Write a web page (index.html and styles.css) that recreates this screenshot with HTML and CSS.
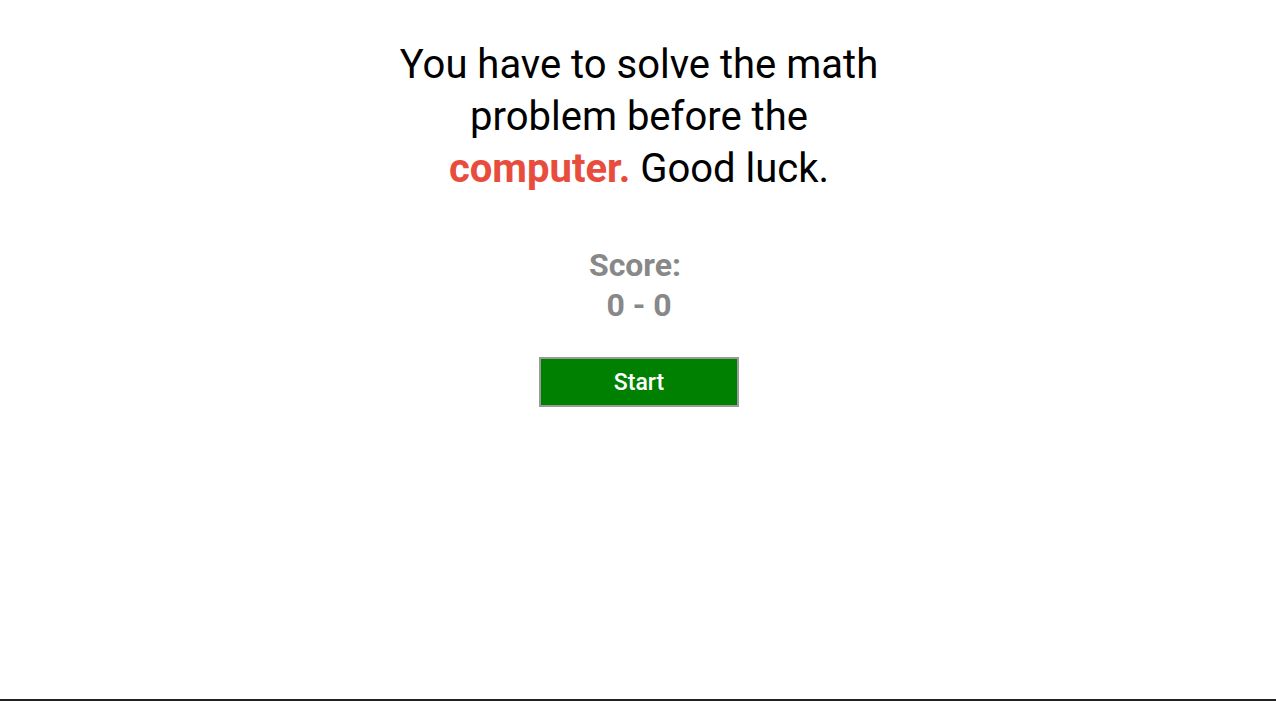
FILE: index.html
```html
<!DOCTYPE html>
<html>
<head>
<meta charset="utf-8">
<link rel="stylesheet" href="styles.css">
</head>
<body>
<div class="page">
  <main class="game">
    <h1 class="intro">You have to solve the math problem before the <span class="computer">computer.</span> Good luck.</h1>
    <div class="score">
      <div class="score-label">Score:</div>
      <div>0 - 0</div>
    </div>
    <button class="start">Start</button>
  </main>
  <div class="edge"></div>
</div>
</body>
</html>
```
FILE: styles.css
```css
html, body {
  margin: 0;
  padding: 0;
  background: #fff;
}
.page {
  height: 701px;
  display: flex;
  flex-direction: column;
  font-family: Roboto, "Liberation Sans", sans-serif;
}
.game {
  flex: 1;
  display: flex;
  flex-direction: column;
  align-items: center;
  padding-left: 2px;
}
.intro {
  width: 520px;
  margin: 39px 0 0;
  font-size: 40px;
  font-weight: 400;
  line-height: 52px;
  text-align: center;
  color: #000;
}
.computer {
  color: #e84c3d;
  font-weight: 700;
}
.score {
  margin-top: 50px;
  font-size: 32px;
  font-weight: 700;
  line-height: 40px;
  color: #888;
  text-align: center;
}
.score-label {
  padding-right: 8px;
}
.start {
  margin-top: 32px;
  width: 200px;
  height: 50px;
  background: #008000;
  border: 2px solid #9a9a9a;
  color: #fff;
  font-family: Roboto, "Liberation Sans", sans-serif;
  font-size: 23px;
  font-weight: 500;
  padding: 0;
}
.edge {
  height: 2px;
  background: #222;
}
```
